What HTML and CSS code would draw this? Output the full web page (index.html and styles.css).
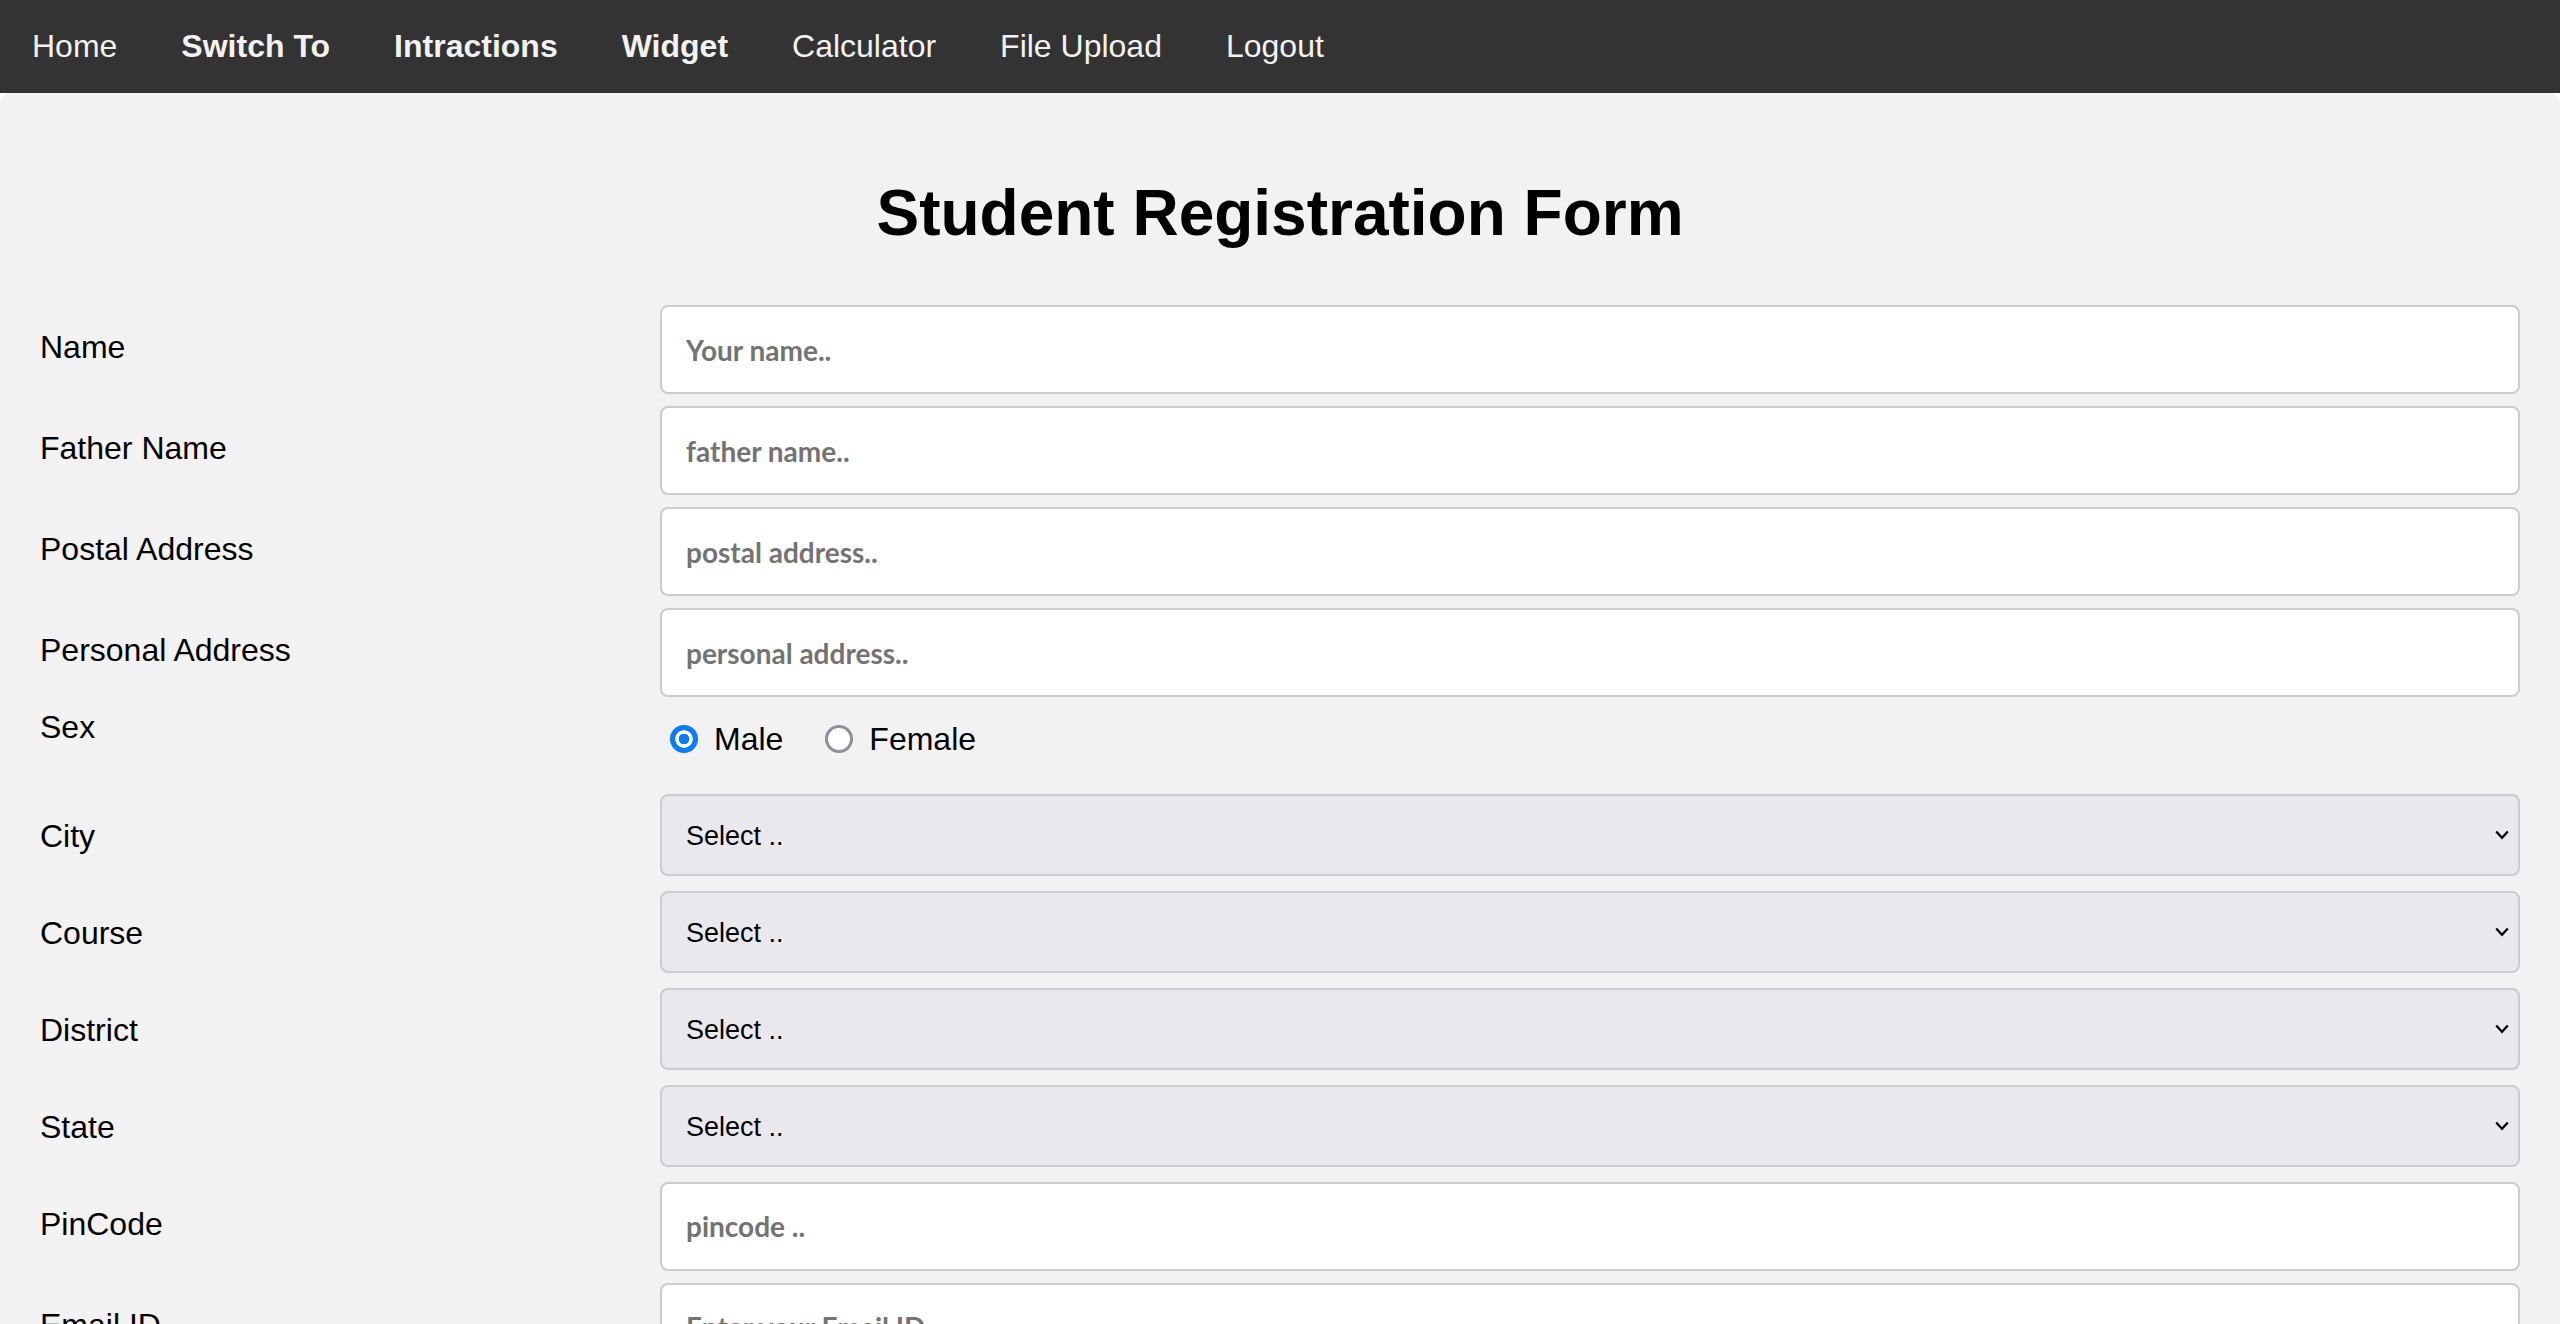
FILE: index.html
```html
<!DOCTYPE html>
<html lang="en">
<head>
<meta charset="utf-8">
<title>Student Registration Form</title>
<link rel="stylesheet" href="styles.css">
</head>
<body>
<nav class="topnav">
  <a href="#" class="nav-link">Home</a>
  <a href="#" class="nav-link nav-bold">Switch To</a>
  <a href="#" class="nav-link nav-bold">Intractions</a>
  <a href="#" class="nav-link nav-bold">Widget</a>
  <a href="#" class="nav-link">Calculator</a>
  <a href="#" class="nav-link">File Upload</a>
  <a href="#" class="nav-link">Logout</a>
</nav>
<div class="container">
  <h1 class="title">Student Registration Form</h1>
  <form class="form">
    <div class="row">
      <div class="col-25"><label class="field-label" for="name">Name</label></div>
      <div class="col-75"><input class="text-input" type="text" id="name" placeholder="Your name.."></div>
    </div>
    <div class="row">
      <div class="col-25"><label class="field-label" for="fname">Father Name</label></div>
      <div class="col-75"><input class="text-input" type="text" id="fname" placeholder="father name.."></div>
    </div>
    <div class="row">
      <div class="col-25"><label class="field-label" for="paddress">Postal Address</label></div>
      <div class="col-75"><input class="text-input" type="text" id="paddress" placeholder="postal address.."></div>
    </div>
    <div class="row">
      <div class="col-25"><label class="field-label" for="personaladdress">Personal Address</label></div>
      <div class="col-75"><input class="text-input" type="text" id="personaladdress" placeholder="personal address.."></div>
    </div>
    <div class="row">
      <div class="col-25"><span class="plain-label">Sex</span></div>
      <div class="col-75">
        <div class="radio-group">
          <input class="radio" type="radio" name="sex" id="male" checked>
          <label class="radio-label" for="male">Male</label>
          <input class="radio" type="radio" name="sex" id="female">
          <label class="radio-label" for="female">Female</label>
        </div>
      </div>
    </div>
    <div class="row">
      <div class="col-25"><label class="field-label" for="city">City</label></div>
      <div class="col-75"><select class="select" id="city"><option>Select ..</option></select></div>
    </div>
    <div class="row">
      <div class="col-25"><label class="field-label" for="course">Course</label></div>
      <div class="col-75"><select class="select" id="course"><option>Select ..</option></select></div>
    </div>
    <div class="row">
      <div class="col-25"><label class="field-label" for="district">District</label></div>
      <div class="col-75"><select class="select" id="district"><option>Select ..</option></select></div>
    </div>
    <div class="row">
      <div class="col-25"><label class="field-label" for="state">State</label></div>
      <div class="col-75"><select class="select" id="state"><option>Select ..</option></select></div>
    </div>
    <div class="row">
      <div class="col-25"><label class="field-label" for="pincode">PinCode</label></div>
      <div class="col-75"><input class="text-input" type="text" id="pincode" placeholder="pincode .."></div>
    </div>
    <div class="row">
      <div class="col-25"><label class="field-label" for="email">Email ID</label></div>
      <div class="col-75"><input class="text-input" type="text" id="email" placeholder="Enter your Email ID"></div>
    </div>
  </form>
</div>
</body>
</html>
```
FILE: styles.css
```css
html, body {
  margin: 0;
  padding: 0;
}
body {
  background: #ffffff;
  font-family: "Liberation Sans", Arial, Helvetica, sans-serif;
  color: #000;
}
.topnav {
  display: flex;
  background: #333333;
}
.nav-link {
  display: block;
  padding: 28px 32px;
  font-size: 32px;
  line-height: 36.8px;
  color: #f2f2f2;
  text-decoration: none;
}
.nav-bold {
  font-weight: bold;
}
.container {
  background: #f2f2f2;
  border-radius: 10px;
  padding: 41px 40px 40px;
}
.title {
  text-align: center;
  font-size: 64px;
  line-height: 73.6px;
  font-weight: bold;
  margin: 43px 0;
}
.form {
  margin: 0;
}
.row {
  display: flex;
  align-items: flex-start;
}
.col-25 {
  flex: 0 0 25%;
  margin-top: 12px;
}
.col-75 {
  flex: 0 0 75%;
  margin-top: 12px;
}
.field-label {
  display: inline-block;
  padding: 24px 24px 24px 0;
  font-size: 32px;
  line-height: 36.8px;
}
.plain-label {
  display: block;
  font-size: 32px;
  line-height: 36.8px;
  margin-top: 0;
}
.text-input {
  display: block;
  width: 100%;
  box-sizing: border-box;
  height: 89px;
  margin: 0;
  padding: 0 24px;
  border: 2px solid #cccccc;
  border-radius: 8px;
  background: #ffffff;
  font-family: Lato, "Open Sans", sans-serif;
  font-size: 28px;
  font-weight: 700;
  color: #000;
  outline: none;
}
.text-input::placeholder {
  color: #737373;
  opacity: 1;
}
.select {
  display: block;
  width: 100%;
  box-sizing: border-box;
  height: 82px;
  margin: 0;
  padding: 2px 24px 0;
  border: 2px solid #cccccc;
  border-radius: 8px;
  -webkit-appearance: none;
  appearance: none;
  background-color: #e9e9ed;
  background-image: url("data:image/svg+xml,%3Csvg xmlns='http://www.w3.org/2000/svg' width='14' height='10' viewBox='0 0 14 10'%3E%3Cpolyline points='1.2,1.5 7,7.8 12.8,1.5' fill='none' stroke='%23000' stroke-width='2.2'/%3E%3C/svg%3E");
  background-repeat: no-repeat;
  background-position: right 9px center;
  background-size: 14px 10px;
  font-family: "Liberation Sans", Arial, sans-serif;
  font-size: 27px;
  color: #000;
}
.radio-group {
  display: flex;
  align-items: center;
  height: 60px;
  padding-bottom: 13px;
}
.radio {
  -webkit-appearance: none;
  appearance: none;
  width: 28px;
  height: 28px;
  box-sizing: border-box;
  margin: 0 16px 0 10px;
  border-radius: 50%;
  border: 3px solid #8f8f9d;
  background: #ffffff;
}
.radio:checked {
  border: none;
  background: radial-gradient(circle, #0b7bf9 0 5px, #ffffff 5.6px 8.4px, #0b7bf9 9px);
}
.radio-label {
  font-size: 32px;
  line-height: 36.8px;
  margin-right: 32px;
}
```
